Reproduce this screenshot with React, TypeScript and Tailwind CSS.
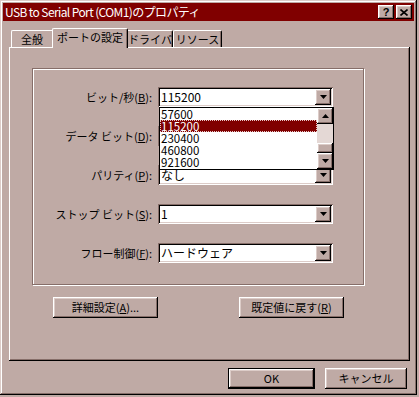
import React from "react";

const raised =
  "shadow-[inset_-1px_-1px_0_#000,inset_1px_1px_0_#fff,inset_-2px_-2px_0_#866e69,inset_2px_2px_0_#dcccc8]";
const sunken =
  "shadow-[inset_1px_1px_0_#866e69,inset_-1px_-1px_0_#fff,inset_2px_2px_0_#000,inset_-2px_-2px_0_#dcccc8]";

function DownArrow() {
  return (
    <svg width="7" height="4" viewBox="0 0 7 4" className="block">
      <path d="M0 0h7L3.5 4z" fill="#000" />
    </svg>
  );
}

function UpArrow() {
  return (
    <svg width="7" height="4" viewBox="0 0 7 4" className="block">
      <path d="M0 4h7L3.5 0z" fill="#000" />
    </svg>
  );
}

function ArrowButton({ up = false, className = "" }: { up?: boolean; className?: string }) {
  return (
    <div className={`w-[16px] h-[16px] bg-[#bfaaa5] flex items-center justify-center ${raised} ${className}`}>
      {up ? <UpArrow /> : <DownArrow />}
    </div>
  );
}

function Combo({ value }: { value: string }) {
  return (
    <div className={`w-[175px] h-[20px] bg-white flex items-center p-[2px] ${sunken}`}>
      <span className="flex-1 pl-[1px] leading-none text-[12px]">{value}</span>
      <ArrowButton />
    </div>
  );
}

function Label({ text, key1 }: { text: string; key1: string }) {
  return (
    <span className="w-[119px] text-right leading-none whitespace-nowrap">
      {text}(<span className="underline">{key1}</span>):
    </span>
  );
}

// data bits value sits under the open list, so it is left blank
const rows = [
  { text: "ビット/秒", k: "B", value: "115200" },
  { text: "データ ビット", k: "D", value: "" },
  { text: "パリティ", k: "P", value: "なし" },
  { text: "ストップ ビット", k: "S", value: "1" },
  { text: "フロー制御", k: "F", value: "ハードウェア" },
];

const listItems = ["57600", "115200", "230400", "460800", "921600"];

function Button({ children, className = "" }: { children: React.ReactNode; className?: string }) {
  return (
    <div className={`h-[21px] bg-[#bfaaa5] flex items-center justify-center leading-none whitespace-nowrap ${raised} ${className}`}>
      {children}
    </div>
  );
}

export default function App() {
  return (
    <div className="w-[419px] h-[397px] bg-[#bfaaa5] text-black text-[11px] font-['Noto_Sans_CJK_JP',sans-serif]">
      <div className="w-[417px] h-[395px] p-[3px] flex flex-col shadow-[inset_-1px_-1px_0_#000,inset_1px_1px_0_#dcccc8,inset_-2px_-2px_0_#866e69,inset_2px_2px_0_#fff]">
        {/* title bar */}
        <div className="h-[18px] bg-[#800000] flex items-center pl-[2px] pr-[2px]">
          <span className="text-white text-[12px] tracking-[-0.6px] leading-none whitespace-nowrap">
            USB to Serial Port (COM1)のプロパティ
          </span>
          <div className="ml-auto flex gap-[2px]">
            <div className={`w-[16px] h-[14px] bg-[#bfaaa5] flex items-center justify-center ${raised}`}>
              <span className="font-bold text-[11px] leading-none font-['Liberation_Sans',sans-serif]">?</span>
            </div>
            <div className={`w-[16px] h-[14px] bg-[#bfaaa5] flex items-center justify-center ${raised}`}>
              <svg width="8" height="7" viewBox="0 0 8 7" className="block">
                <path d="M0.5 0.5L7.5 6.5M7.5 0.5L0.5 6.5" stroke="#000" strokeWidth="1.6" />
              </svg>
            </div>
          </div>
        </div>

        {/* tabs */}
        <div className="mt-[7px] ml-[8px] h-[19px] flex items-end relative z-10 whitespace-nowrap">
          <div className="w-[41px] h-[17px] border-t border-l border-[#fff] rounded-tl-[2px] flex items-center justify-center leading-none">
            全般
          </div>
          <div className="w-[76px] h-[20px] -mb-[1px] bg-[#bfaaa5] border-t border-l border-r border-t-[#fff] border-l-[#fff] border-r-[#000] rounded-t-[2px] shadow-[inset_-1px_0_0_#866e69] flex items-start pt-[3px] justify-center leading-none">
            ポートの設定
          </div>
          <div className="w-[45px] h-[17px] border-t border-r border-t-[#fff] border-r-[#000] rounded-tr-[2px] shadow-[inset_-1px_0_0_#866e69] flex items-center justify-center leading-none">
            ドライバ
          </div>
          <div className="w-[49px] h-[17px] border-t border-l border-r border-t-[#fff] border-l-[#fff] border-r-[#000] rounded-t-[2px] shadow-[inset_-1px_0_0_#866e69] flex items-center justify-center leading-none">
            リソース
          </div>
        </div>

        {/* panel */}
        <div className="ml-[6px] w-[401px] h-[314px] flex flex-col shadow-[inset_-1px_-1px_0_#000,inset_1px_1px_0_#fff,inset_-2px_-2px_0_#866e69]">
          <div className="relative ml-[23px] mt-[21px] w-[332px] h-[217px] border border-[#866e69] shadow-[inset_1px_1px_0_#fff,1px_1px_0_#fff] flex flex-col gap-[19px] pt-[18px]">
            {rows.map((r) => (
              <div key={r.k} className="flex items-center h-[20px]">
                <Label text={r.text} key1={r.k} />
                <div className="ml-[6px]">
                  <Combo value={r.value} />
                </div>
              </div>
            ))}

            {/* open dropdown list */}
            <div className="absolute left-[126px] top-[38px] w-[175px] h-[63px] bg-white border border-black flex">
              <div className="flex-1 flex flex-col">
                {listItems.map((it) => (
                  <div
                    key={it}
                    className={`h-[12px] pl-[1px] text-[11.5px] leading-[12px] ${
                      it === "115200"
                        ? "bg-[#800000] text-white outline-1 outline-dotted outline-[#e8c8c8] -outline-offset-1"
                        : ""
                    }`}
                  >
                    {it}
                  </div>
                ))}
              </div>
              <div className="w-[16px] flex flex-col">
                <ArrowButton up />
                <div className="h-[19px] bg-[#e4d8d5]" />
                <div className={`h-[10px] bg-[#bfaaa5] ${raised}`} />
                <ArrowButton />
              </div>
            </div>
          </div>

          <div className="flex mt-[12px] ml-[44px] gap-[81px]">
            <Button className="w-[105px]">
              詳細設定(<span className="underline">A</span>)...
            </Button>
            <Button className="w-[105px]">
              既定値に戻す(<span className="underline">R</span>)
            </Button>
          </div>
        </div>

        {/* bottom buttons */}
        <div className="flex mt-[7px] ml-[225px] gap-[10px]">
          <div className="w-[87px] h-[21px] border border-black">
            <Button className="w-full h-full">OK</Button>
          </div>
          <Button className="w-[82px]">キャンセル</Button>
        </div>
      </div>
    </div>
  );
}
